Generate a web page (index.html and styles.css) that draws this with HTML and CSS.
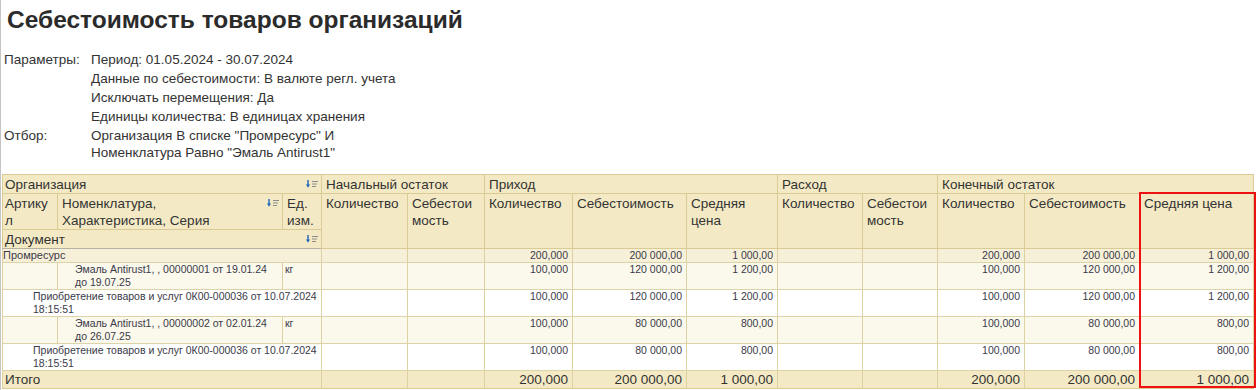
FILE: index.html
```html
<!DOCTYPE html>
<html lang="ru">
<head>
<meta charset="utf-8">
<title>Себестоимость товаров организаций</title>
<link rel="stylesheet" href="styles.css">
</head>
<body>
<div class="page">
  <h1 class="title">Себестоимость товаров организаций</h1>

  <table class="params">
    <tr><td class="label">Параметры:</td><td>Период: 01.05.2024 - 30.07.2024</td></tr>
    <tr><td class="label"></td><td>Данные по себестоимости: В валюте регл. учета</td></tr>
    <tr><td class="label"></td><td>Исключать перемещения: Да</td></tr>
    <tr><td class="label"></td><td>Единицы количества: В единицах хранения</td></tr>
    <tr class="filter"><td class="label">Отбор:</td><td>Организация В списке "Промресурс" И<br>Номенклатура Равно "Эмаль Antirust1"</td></tr>
  </table>

  <div class="report">
    <table class="grid">
      <colgroup>
        <col style="width:55px"><col style="width:225px"><col style="width:39px">
        <col style="width:86px"><col style="width:77px">
        <col style="width:88px"><col style="width:114px"><col style="width:91px">
        <col style="width:85px"><col style="width:75px">
        <col style="width:87px"><col style="width:115px"><col style="width:114px">
      </colgroup>
      <thead>
        <tr class="h1">
          <th colspan="3"><div class="hcell"><span>Организация</span><svg class="sort" viewBox="0 0 12 8" width="12" height="8"><path d="M2 0v5" stroke="#1f63b8" stroke-width="1.4"/><path d="M0 4.5h4L2 7.8z" fill="#1f63b8"/><path d="M6 1.5h6M6 4h5M6 6.5h4" stroke="#8c8c8c" stroke-width="1"/></svg></div></th>
          <th colspan="2">Начальный остаток</th>
          <th colspan="3">Приход</th>
          <th colspan="2">Расход</th>
          <th colspan="3">Конечный остаток</th>
        </tr>
        <tr class="h2">
          <th class="wrap">Артикул</th>
          <th><div class="hcell"><span>Номенклатура,<br>Характеристика, Серия</span><svg class="sort" viewBox="0 0 12 8" width="12" height="8"><path d="M2 0v5" stroke="#1f63b8" stroke-width="1.4"/><path d="M0 4.5h4L2 7.8z" fill="#1f63b8"/><path d="M6 1.5h6M6 4h5M6 6.5h4" stroke="#8c8c8c" stroke-width="1"/></svg></div></th>
          <th class="wrap">Ед. изм.</th>
          <th rowspan="2" class="wrap">Количество</th>
          <th rowspan="2" class="wrap narrow">Себестоимость</th>
          <th rowspan="2" class="wrap">Количество</th>
          <th rowspan="2" class="wrap">Себестоимость</th>
          <th rowspan="2" class="wrap">Средняя цена</th>
          <th rowspan="2" class="wrap">Количество</th>
          <th rowspan="2" class="wrap narrow">Себестоимость</th>
          <th rowspan="2" class="wrap">Количество</th>
          <th rowspan="2" class="wrap">Себестоимость</th>
          <th rowspan="2" class="wrap">Средняя цена</th>
        </tr>
        <tr class="h3">
          <th colspan="3"><div class="hcell"><span>Документ</span><svg class="sort" viewBox="0 0 12 8" width="12" height="8"><path d="M2 0v5" stroke="#1f63b8" stroke-width="1.4"/><path d="M0 4.5h4L2 7.8z" fill="#1f63b8"/><path d="M6 1.5h6M6 4h5M6 6.5h4" stroke="#8c8c8c" stroke-width="1"/></svg></div></th>
        </tr>
      </thead>
      <tbody>
        <tr class="group">
          <td colspan="3" class="txt">Промресурс</td>
          <td></td><td></td>
          <td class="num">200,000</td><td class="num">200 000,00</td><td class="num">1 000,00</td>
          <td></td><td></td>
          <td class="num">200,000</td><td class="num">200 000,00</td><td class="num">1 000,00</td>
        </tr>
        <tr class="item">
          <td></td>
          <td class="txt nom">Эмаль Antirust1, , 00000001 от 19.01.24 до 19.07.25</td>
          <td class="txt">кг</td>
          <td></td><td></td>
          <td class="num">100,000</td><td class="num">120 000,00</td><td class="num">1 200,00</td>
          <td></td><td></td>
          <td class="num">100,000</td><td class="num">120 000,00</td><td class="num">1 200,00</td>
        </tr>
        <tr class="doc">
          <td colspan="3" class="txt docname">Приобретение товаров и услуг 0К00-000036 от 10.07.2024 18:15:51</td>
          <td></td><td></td>
          <td class="num">100,000</td><td class="num">120 000,00</td><td class="num">1 200,00</td>
          <td></td><td></td>
          <td class="num">100,000</td><td class="num">120 000,00</td><td class="num">1 200,00</td>
        </tr>
        <tr class="item">
          <td></td>
          <td class="txt nom">Эмаль Antirust1, , 00000002 от 02.01.24 до 26.07.25</td>
          <td class="txt">кг</td>
          <td></td><td></td>
          <td class="num">100,000</td><td class="num">80 000,00</td><td class="num">800,00</td>
          <td></td><td></td>
          <td class="num">100,000</td><td class="num">80 000,00</td><td class="num">800,00</td>
        </tr>
        <tr class="doc">
          <td colspan="3" class="txt docname">Приобретение товаров и услуг 0К00-000036 от 10.07.2024 18:15:51</td>
          <td></td><td></td>
          <td class="num">100,000</td><td class="num">80 000,00</td><td class="num">800,00</td>
          <td></td><td></td>
          <td class="num">100,000</td><td class="num">80 000,00</td><td class="num">800,00</td>
        </tr>
      </tbody>
      <tfoot>
        <tr class="total">
          <td colspan="3" class="txt">Итого</td>
          <td></td><td></td>
          <td class="num">200,000</td><td class="num">200 000,00</td><td class="num">1 000,00</td>
          <td></td><td></td>
          <td class="num">200,000</td><td class="num">200 000,00</td><td class="num">1 000,00</td>
        </tr>
      </tfoot>
    </table>
    <div class="highlight"></div>
  </div>
</div>
</body>
</html>
```

FILE: styles.css
```css
html, body {
  margin: 0;
  padding: 0;
  background: #ffffff;
}

body {
  font-family: "Liberation Sans", Arial, sans-serif;
  color: #333333;
}

.page {
  border-left: 1px solid #c4c4c4;
  min-height: 390px;
  box-sizing: border-box;
}

.title {
  margin: 0;
  padding: 5px 0 0 6px;
  font-size: 24.5px;
  line-height: 30px;
  font-weight: bold;
  color: #2b2b2b;
}

.params {
  border-collapse: collapse;
  margin: 15px 0 0 3px;
  font-size: 13.5px;
  color: #333333;
}

.params td {
  padding: 0;
  height: 19px;
  line-height: 19px;
  vertical-align: top;
  white-space: nowrap;
}

.params td.label {
  width: 87px;
}

.params .filter td {
  line-height: 17px;
  height: auto;
  padding-top: 1px;
}

.report {
  position: relative;
  margin: 13px 0 0 1px;
  width: 1252px;
}

.grid {
  border-collapse: collapse;
  table-layout: fixed;
  width: 1251px;
}

.grid th {
  background: #f3eac5;
  border: 1px solid #d9cb93;
  font-weight: normal;
  font-size: 13.5px;
  line-height: 17px;
  color: #333333;
  text-align: left;
  vertical-align: top;
  padding: 1px 2px 0 4px;
}

.grid th:first-child {
  padding-left: 2px;
}

.grid th.wrap {
  overflow-wrap: anywhere;
}

.grid th.narrow {
  padding-right: 8px;
}

.grid .h1 th {
  height: 17px;
}

.grid .h2 th {
  height: 33px;
}

.grid .h3 th {
  height: 17px;
  border-bottom: 1px solid #b4b1a3;
}

.hcell {
  display: flex;
  justify-content: space-between;
  align-items: flex-start;
}

.sort {
  flex: none;
  margin-top: 4px;
  margin-right: 1px;
}

.grid td {
  border-left: 1px solid #ddd1a2;
  border-right: 1px solid #ddd1a2;
  border-bottom: 1px solid #ddd3a8;
  font-size: 10.5px;
  line-height: 13px;
  color: #3a3a48;
  vertical-align: top;
  padding: 0 4px 0 2px;
}

.grid td.num {
  text-align: right;
}

.grid .group td {
  background: #f7f0d9;
  height: 13px;
}

.grid .group td.txt {
  padding-left: 0;
  font-size: 11px;
}

.grid .item td {
  background: #fbf8ec;
  height: 26px;
}

.grid .doc td {
  background: #ffffff;
  height: 26px;
}

.grid td.nom {
  padding-left: 17px;
}

.grid td.docname {
  padding-left: 30px;
  padding-right: 0;
}

.grid .total td {
  background: #f3eac5;
  border-top: 1px solid #d9cb93;
  border-bottom: 1px solid #d9cb93;
  font-size: 13.5px;
  line-height: 17px;
  height: 16px;
  color: #333333;
}

.grid .total td.txt {
  padding-left: 2px;
}

.highlight {
  position: absolute;
  left: 1137px;
  top: 18px;
  width: 117px;
  height: 196px;
  box-sizing: border-box;
  border: 2px solid #ee1111;
  pointer-events: none;
}
```
